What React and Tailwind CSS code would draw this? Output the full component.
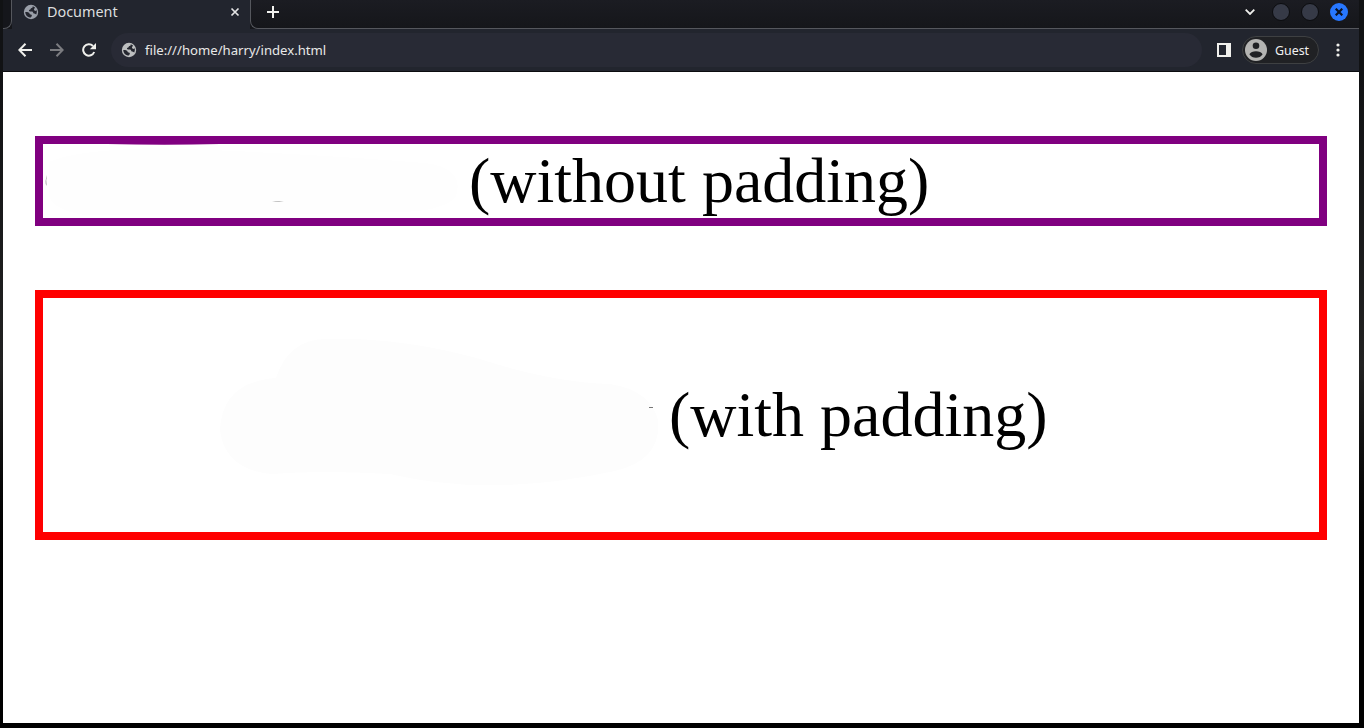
function Globe({ className }) {
  return (
    <svg viewBox="0 0 16 16" className={className}>
      <circle cx="8" cy="8" r="7.200" fill="currentColor" />
      <path
        d="M9.800 2.300Q9.900 4.200 8 4.300Q7.600 5.800 6 5.900Q5.600 7.300 7 7.400L9.300 7.600Q10.300 8 10.300 9.300Q12.200 9.500 13.300 10.500Q14.300 8.500 13.700 6.300L12.300 7Q10.800 6.600 10.900 5Q12 4.500 12 3.600ZM2.200 8.100H4.300Q6.600 8.300 6.900 10.300Q9.200 10.400 9 12.200Q7.600 12.300 7.500 13.800Q2.600 13.200 2.200 8.100Z"
        fill="#24262f"
      />
    </svg>
  );
}

function TabStrip() {
  return (
    <div className="flex h-[29px] bg-gradient-to-b from-[#1b1c22] to-[#15161a]">
      <div className="h-[29px] w-[9px] rounded-br-lg border-r border-b border-[#55575d] bg-[#15161b]" />
      <div className="flex h-[29px] w-[238px] items-start bg-[#22252e]">
        <Globe className="mt-1 ml-[11px] h-4 w-4 shrink-0 text-[#9a9fa9]" />
        <span className="ml-2 w-[183px] text-[14.4px] leading-6 text-[#dddedf]">Document</span>
        <svg viewBox="0 0 10 10" className="mt-[7px] h-[10px] w-[10px] shrink-0">
          <path d="M1.500 1.500 8.500 8.500M8.500 1.500 1.500 8.500" stroke="#e4e4e4" strokeWidth="1.700" />
        </svg>
      </div>
      <div className="flex min-w-0 flex-1 rounded-bl-lg border-b border-l border-[#55575d]">
        <svg viewBox="0 0 12 12" className="mt-[6px] ml-4 h-3 w-3">
          <path d="M6 0V12M0 6H12" stroke="#f1f1ee" strokeWidth="2" />
        </svg>
        <div className="flex-1" />
        <svg viewBox="0 0 10 6" className="mt-[9px] mr-[17px] h-[6px] w-[10px]">
          <path d="m.7.7 4.300 4.300L9.300.7" fill="none" stroke="#eeeeeb" strokeWidth="1.800" />
        </svg>
        <div className="mt-[3px] mr-[11px] h-[18px] w-[18px] rounded-full border border-[#0b0c0f] bg-[#363a47]" />
        <div className="mt-[3px] mr-[11px] h-[18px] w-[18px] rounded-full border border-[#0b0c0f] bg-[#363a47]" />
        <div className="mt-[3px] mr-[11px] flex h-[18px] w-[18px] items-center justify-center rounded-full bg-[#2777ff]">
          <svg viewBox="0 0 8 8" className="h-2 w-2">
            <path d="M.7.7 7.300 7.300M7.300.7.7 7.300" stroke="#0c1220" strokeWidth="2.200" />
          </svg>
        </div>
      </div>
    </div>
  );
}

function Arrow({ className }) {
  return (
    <svg viewBox="0 0 14 14" fill="none" stroke="currentColor" strokeWidth="2" className={className}>
      <path d="M14 7H1.500M7.500.8 1.300 7l6.200 6.200" />
    </svg>
  );
}

function Toolbar() {
  return (
    <div className="flex h-[43px] items-center border-b border-[#0b0c0f] bg-[#22252e] text-[#f0f0ec]">
      <Arrow className="ml-[15px] h-[14px] w-[14px]" />
      <Arrow className="ml-[18px] h-[14px] w-[14px] rotate-180 text-[#7b7c80]" />
      <svg viewBox="0 0 14 14" className="ml-[18px] h-[14px] w-[14px]">
        <path d="M12.200 9A5.700 5.700 0 1 1 11 3" fill="none" stroke="#f0f0ec" strokeWidth="2" />
        <path d="M14 0V6.200H7.800Z" fill="#f0f0ec" />
      </svg>
      <div className="ml-[15px] flex h-[34px] w-[1091px] items-center rounded-full bg-[#282a35]">
        <Globe className="ml-[10px] h-4 w-4 text-[#bdbfc0]" />
        <span className="ml-2 text-[13.150px] leading-5 text-[#e8e8e8]">file:///home/harry/index.html</span>
      </div>
      <svg viewBox="0 0 14 14" className="ml-[15px] h-[14px] w-[14px]">
        <path d="M0 0H14V14H0ZM2 2V12H9V2Z" fill="#f0f0ec" fillRule="evenodd" />
      </svg>
      <div className="ml-[11px] flex h-7 w-[77px] items-center rounded-full border border-[#3e4042] bg-[#202124]">
        <svg viewBox="0 0 22 22" className="ml-[2px] h-[22px] w-[22px]">
          <circle cx="11" cy="11" r="11" fill="#b4b4b2" />
          <circle cx="11" cy="6.700" r="3.300" fill="#202124" />
          <path d="M4.400 15.200C6 11.300 16 11.300 17.600 15.200C15 20 7 20 4.400 15.200Z" fill="#202124" />
        </svg>
        <span className="mt-px ml-2 text-[12.4px] leading-5 text-[#f0f0f0]">Guest</span>
      </div>
      <svg viewBox="0 0 4 14" className="ml-[17px] h-[14px] w-1 fill-[#f0f0ec]">
        <circle cx="2" cy="2" r="1.600" />
        <circle cx="2" cy="7" r="1.600" />
        <circle cx="2" cy="12" r="1.600" />
      </svg>
    </div>
  );
}

export default function App() {
  return (
    <div className="h-[728px] w-[1364px] overflow-hidden bg-gradient-to-b from-[#111214] from-10% via-[#222222] via-50% to-black to-85% font-['Noto_Sans',sans-serif]">
      <div className="ml-[3px] h-[723px] w-[1356px] bg-white">
        <TabStrip />
        <Toolbar />
        <main className="flex flex-col gap-16 px-8 pt-16 font-['Liberation_Serif',serif] text-[64px] leading-[74px] text-black">
          <div className="relative border-8 border-[#800080] pl-[426px]">
            <svg viewBox="0 0 440 90" className="absolute -top-2 -left-2 h-[90px] w-[440px]">
              <path d="M14 26Q40 14 120 12Q250 16 390 27Q430 32 421 60Q410 75 365 76Q200 80 50 79Q18 74 14 60Z" fill="#fefefe" />
              <path d="M72 8Q130 9.500 185 8Z" fill="#800080" />
              <path d="M12 39Q9.500 46 11.500 50Q10.500 44 12 39Z" fill="#777" />
              <path d="M237 66Q243 64.500 249 65.500Q244 65.500 237 66Z" fill="#aaa" />
            </svg>
            (without padding)
          </div>
          <div className="relative border-8 border-[#ff0000] py-20 pl-[626px]">
            <svg viewBox="0 0 500 190" className="absolute top-[22px] left-[157px] h-[190px] w-[500px]">
              <path d="M76 58Q88 20 125 19Q200 17 280 39Q350 62 410 64Q450 70 458 100Q462 140 415 151Q290 178 190 154Q120 150 72 154Q25 150 20 110Q22 62 76 58Z" fill="#fdfdfd" />
              <path d="M449 87.500H453" stroke="#777" />
            </svg>
            (with padding)
          </div>
        </main>
      </div>
    </div>
  );
}
